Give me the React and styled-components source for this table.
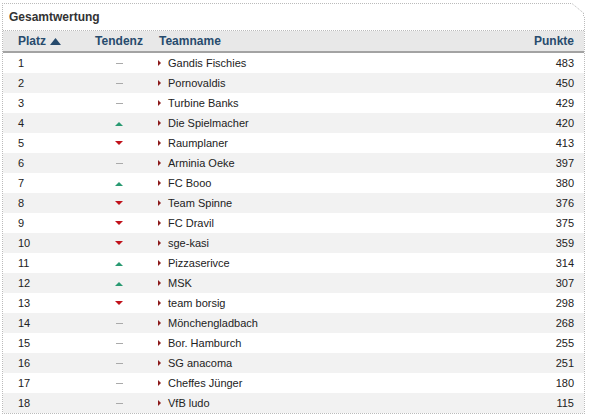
import React from "react";
import styled, { createGlobalStyle } from "styled-components";

const rows = [
  [1, "same", "Gandis Fischies", 483],
  [2, "same", "Pornovaldis", 450],
  [3, "same", "Turbine Banks", 429],
  [4, "up", "Die Spielmacher", 420],
  [5, "down", "Raumplaner", 413],
  [6, "same", "Arminia Oeke", 397],
  [7, "up", "FC Booo", 380],
  [8, "down", "Team Spinne", 376],
  [9, "down", "FC Dravil", 375],
  [10, "down", "sge-kasi", 359],
  [11, "up", "Pizzaserivce", 314],
  [12, "up", "MSK", 307],
  [13, "down", "team borsig", 298],
  [14, "same", "Mönchengladbach", 268],
  [15, "same", "Bor. Hamburch", 255],
  [16, "same", "SG anacoma", 251],
  [17, "same", "Cheffes Jünger", 180],
  [18, "same", "VfB ludo", 115],
];

function Trend({ dir }) {
  if (dir === "up") {
    return (
      <svg width="8" height="5" viewBox="0 0 8 5">
        <polygon points="0,5 8,5 4,1" fill="#2a9a72" />
      </svg>
    );
  }
  if (dir === "down") {
    return (
      <svg width="8" height="5" viewBox="0 0 8 5">
        <polygon points="0,0 8,0 4,4" fill="#c0121b" />
      </svg>
    );
  }
  return <Dash />;
}

export default function App() {
  return (
    <>
      <GlobalStyle />
      <Panel>
        <Corner width="13" height="13" viewBox="0 0 13 13">
          <rect x="0" y="0" width="13" height="13" fill="#fff" />
          <line x1="0" y1="0.5" x2="11.5" y2="10" stroke="#bbb" strokeDasharray="1 1" />
          <line x1="11.5" y1="10" x2="11.5" y2="13" stroke="#bbb" strokeDasharray="1 1" />
        </Corner>
        <Title>Gesamtwertung</Title>
        <HeadRow>
          <HeadCell>
            Platz
            <svg width="11" height="7" viewBox="0 0 11 7">
              <polygon points="0,7 11,7 5.5,0" fill="#274b6d" />
            </svg>
          </HeadCell>
          <HeadCell $align="center">Tendenz</HeadCell>
          <HeadCell>Teamname</HeadCell>
          <HeadCell $align="right">Punkte</HeadCell>
        </HeadRow>
        {rows.map(([place, dir, name, pts], i) => (
          <Row key={place} $alt={i % 2 === 1}>
            <Cell>{place}</Cell>
            <Cell $align="center">
              <Trend dir={dir} />
            </Cell>
            <Cell>
              <Marker />
              {name}
            </Cell>
            <Cell $align="right">{pts}</Cell>
          </Row>
        ))}
      </Panel>
    </>
  );
}

const GlobalStyle = createGlobalStyle`
  body {
    margin: 0;
    background: #fff;
    font-family: "Liberation Sans", Arial, sans-serif;
  }
`;

const Panel = styled.div`
  position: relative;
  margin: 3px 0 0 2px;
  width: 581px;
  border: 1px dotted #bbb;
  border-top: 1px dotted #bbb;
`;

const Corner = styled.svg`
  position: absolute;
  top: -1px;
  right: -1px;
  display: block;
`;

const Title = styled.div`
  height: 26px;
  padding-left: 6px;
  display: flex;
  align-items: center;
  font-size: 12px;
  font-weight: bold;
  color: #333;
  border-bottom: 1px dotted #bbb;
`;

const HeadRow = styled.div`
  display: grid;
  grid-template-columns: 77px 78px 1fr 120px;
  height: 20px;
  background: #e8e8e8;
  border-bottom: 2px solid #a3a3a3;
`;

const HeadCell = styled.div`
  display: flex;
  align-items: center;
  gap: 4px;
  justify-content: ${(p) =>
    p.$align === "center" ? "center" : p.$align === "right" ? "flex-end" : "flex-start"};
  padding: ${(p) => (p.$align === "right" ? "0 10px 0 0" : p.$align === "center" ? "0" : "0 0 0 15px")};
  font-size: 12px;
  font-weight: bold;
  color: #274b6d;

  &:nth-child(3) {
    padding-left: 1px;
  }
`;

const Row = styled.div`
  display: grid;
  grid-template-columns: 77px 78px 1fr 120px;
  height: 20px;
  background: ${(p) => (p.$alt ? "#f2f2f2" : "#fff")};
`;

const Cell = styled.div`
  display: flex;
  align-items: center;
  justify-content: ${(p) =>
    p.$align === "center" ? "center" : p.$align === "right" ? "flex-end" : "flex-start"};
  padding: ${(p) => (p.$align === "right" ? "0 10px 0 0" : p.$align === "center" ? "0" : "0 0 0 15px")};
  font-size: 11px;
  color: #222;

  &:nth-child(3) {
    padding-left: 0;
  }
`;

const Marker = styled.span`
  display: inline-block;
  width: 0;
  height: 0;
  margin: 0 7px 0 0;
  border-top: 3px solid transparent;
  border-bottom: 3px solid transparent;
  border-left: 3px solid #8b1a1a;
`;

const Dash = styled.span`
  display: inline-block;
  width: 7px;
  height: 1px;
  background: #aaa;
`;
